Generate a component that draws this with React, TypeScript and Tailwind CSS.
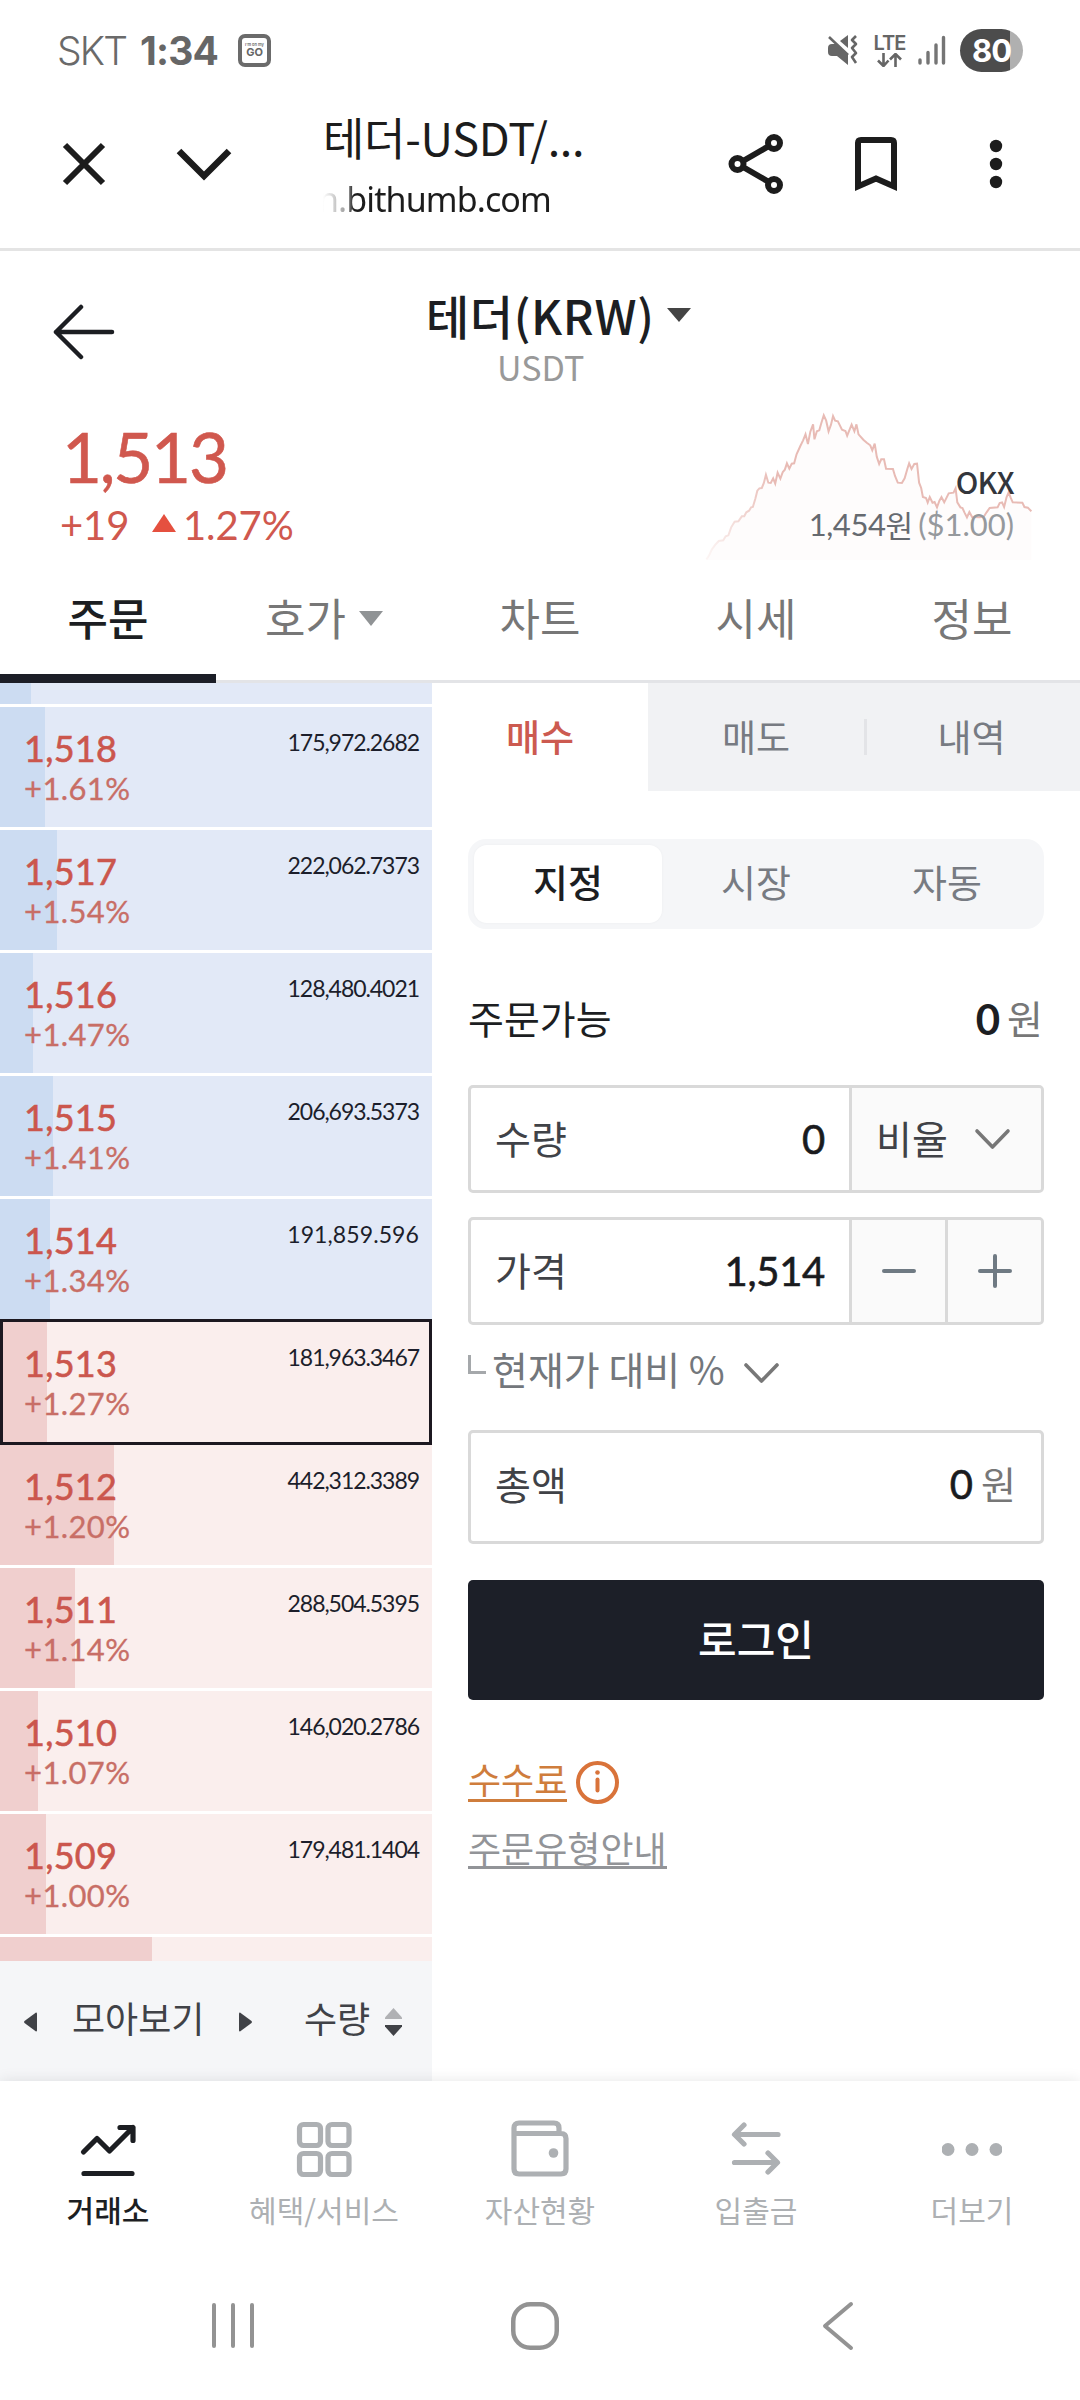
import type { ReactNode } from 'react';
import clsx from 'clsx';

const KR = "font-['Noto_Sans_CJK_KR',sans-serif]";
const NUM = "font-['Lato',sans-serif]";

type Level = { price: string; rate: string; amount: string; bar: number };

const asks: Level[] = [
    { price: '1,518', rate: '+1.61%', amount: '175,972.2682', bar: 45 },
    { price: '1,517', rate: '+1.54%', amount: '222,062.7373', bar: 57 },
    { price: '1,516', rate: '+1.47%', amount: '128,480.4021', bar: 33 },
    { price: '1,515', rate: '+1.41%', amount: '206,693.5373', bar: 53 },
    { price: '1,514', rate: '+1.34%', amount: '191,859.596', bar: 50 },
];

const current: Level = { price: '1,513', rate: '+1.27%', amount: '181,963.3467', bar: 47 };

const bids: Level[] = [
    { price: '1,512', rate: '+1.20%', amount: '442,312.3389', bar: 114 },
    { price: '1,511', rate: '+1.14%', amount: '288,504.5395', bar: 75 },
    { price: '1,510', rate: '+1.07%', amount: '146,020.2786', bar: 38 },
    { price: '1,509', rate: '+1.00%', amount: '179,481.1404', bar: 46 },
];

const SPARK =
    'M484 898L492 886L500 868L510 854L520 843L533 841L540 829L548 826L556 802L566 785L577 784L587 769L594 769L600 757L608 752L614 742L619 741L626 717L632 692L638 685L645 684L651 669L657 644L664 668L671 669L678 655L684 671L691 638L699 656L706 636L712 629L718 610L725 626L732 611L739 610L746 583L757 558L765 541L772 523L779 552L786 515L794 493L798 538L805 514L812 511L818 489L825 466L832 482L839 514L846 494L852 468L858 482L866 484L878 509L888 513L893 527L906 494L914 514L920 493L926 523L940 539L950 548L960 556L966 571L973 551L979 590L986 612L992 598L1000 598L1006 626L1026 627L1032 648L1040 668L1052 669L1060 655L1068 626L1073 610L1080 627L1088 612L1096 611L1102 668L1108 684L1113 711L1122 714L1127 728L1133 711L1141 728L1147 726L1154 742L1161 722L1167 711L1175 727L1188 700L1202 698L1208 685L1213 727L1222 742L1228 744L1234 758L1241 772L1248 756L1256 771L1278 772L1290 770L1298 757L1307 744L1330 742L1336 729L1343 727L1349 741L1356 712L1362 697L1368 713L1374 727L1402 728L1408 741L1418 743L1428 754';

function StatusBar() {
    return (
        <div className="flex h-[80px] items-start justify-between pl-[57px] pr-[57px] pt-[29px] text-[#666]">
            <div className="flex h-[42px] items-center font-['Inter',sans-serif] text-[39px] leading-none">
                <span className="w-[83px] font-light tracking-[-1.800px] text-[#6a6a6a]">SKT</span>
                <span className="w-[98px] font-bold tracking-[-0.800px]">1:34</span>
                <span className="flex h-[33px] w-[33px] flex-col items-center justify-center rounded-[7px] border-4 border-[#6b6b6b] leading-none">
                    <span className="whitespace-nowrap text-[4px] font-semibold">I&apos;m on my</span>
                    <span className="text-[11px] font-bold">GO</span>
                </span>
            </div>
            <div className="flex h-[42px] items-center">
                <svg className="h-[30px] w-[31px]" viewBox="0 0 31 30" fill="none">
                    <path d="M1 13q0-4 4-4h5l11 10v11L10 21H5q-4 0-4-4z" fill="#666" />
                    <path d="M13 6l8-6v13z" fill="#666" />
                    <path d="M2 2l19 18" stroke="#666" strokeWidth="2.5" />
                    <path d="M29 1l-4 4 4 4-4 4 4 5-4 4 4 6" stroke="#666" strokeWidth="2.6" strokeLinejoin="round" />
                </svg>
                <div className="ml-[15px] flex w-[33px] flex-col items-center">
                    <span className="font-['Inter',sans-serif] text-[20px] font-semibold leading-[19px] tracking-[-1px]">LTE</span>
                    <svg className="h-[14px] w-[25px]" viewBox="0 0 25 14" fill="none" stroke="#666" strokeWidth="2.6">
                        <path d="M6.500 0v13M1 7.500l5.500 5.500 5-5.500M18.500 14V1M13 6.500L18.500 1 24 6.500" />
                    </svg>
                </div>
                <svg className="ml-[12px] h-[30px] w-[28px]" viewBox="0 0 28 30" stroke="#757575" strokeWidth="3.400" strokeLinecap="round">
                    <path d="M2 25v3M10 17.500v10.500M18 10v18M25.500 2.500v25.500" />
                </svg>
                <div className="ml-[14px] flex h-[43px] w-[63px] items-center justify-center rounded-full bg-[linear-gradient(90deg,#4c4c4c_50px,#b0b0b0_50px)] font-['Inter',sans-serif] text-[31px] font-bold leading-none tracking-[-1px] text-white">
                    80
                </div>
            </div>
        </div>
    );
}

function BrowserBar() {
    return (
        <div className="flex h-[171px] items-center border-b-[3px] border-[#e4e4e4] pl-[62px] text-[#1c1c1c]">
            <svg className="h-[44px] w-[44px]" viewBox="0 0 44 44" stroke="currentColor" strokeWidth="6">
                <path d="M3 3l38 38M41 3L3 41" />
            </svg>
            <svg className="ml-[70px] h-[34px] w-[56px]" viewBox="0 0 56 34" fill="none" stroke="currentColor" strokeWidth="6.500">
                <path d="M3 4l25 25L53 4" />
            </svg>
            <div className={clsx(KR, 'ml-[91px] w-[265px] whitespace-nowrap pt-[9px]')}>
                <div className="text-[45px] leading-[58px] tracking-[-0.300px]">테더-USDT/...</div>
                <div className="mt-[3px] bg-[linear-gradient(90deg,#fff_0px,#999_24px,#1c1c1c_31px)] bg-clip-text font-['Noto_Sans',sans-serif] text-[34px] leading-[60px] tracking-[-0.900px] text-transparent">
                    <span className="-ml-[5px]">n.bithumb.com</span>
                </div>
            </div>
            <svg className="ml-[140px] h-[62px] w-[56px]" viewBox="0 0 56 62" fill="none" stroke="currentColor" strokeWidth="6">
                <circle cx="9.500" cy="31" r="6" />
                <circle cx="46" cy="10" r="6" />
                <circle cx="46" cy="52" r="6" />
                <path d="M15 28l26-15M15 34l26 15" />
            </svg>
            <svg className="ml-[70px] h-[56px] w-[44px]" viewBox="0 0 44 56" fill="none" stroke="currentColor" strokeWidth="6">
                <path d="M4 50.500V7q0-3 3-3h30q3 0 3 3v43.500l-18-8z" />
            </svg>
            <svg className="ml-[91px] h-[50px] w-[14px]" viewBox="0 0 14 50" fill="currentColor">
                <circle cx="7" cy="7" r="6.200" />
                <circle cx="7" cy="25" r="6.200" />
                <circle cx="7" cy="43" r="6.200" />
            </svg>
        </div>
    );
}

function CoinHeader() {
    return (
        <header className="flex h-[149px] items-start pl-[52px] pt-[38px]">
            <svg className="mt-[15px] h-[56px] w-[64px]" viewBox="0 0 64 56" fill="none" stroke="#1c1e22" strokeWidth="4.500" strokeLinecap="round" strokeLinejoin="round">
                <path d="M29 3L4 28l25 25M4 28h56" />
            </svg>
            <div className={clsx(KR, 'ml-[306px] flex w-[280px] flex-col')}>
                <div className="flex items-center gap-[14px] text-[47px] font-medium leading-[52px] text-[#1c1e22]">
                    <span className="w-[231px] whitespace-nowrap pl-1 tracking-[0.600px]">테더(KRW)</span>
                    <svg className="h-[14px] w-[24px]" viewBox="0 0 24 14" fill="#444">
                        <path d="M0 0h24L12 14z" />
                    </svg>
                </div>
                <span className="pl-[75px] text-[34px] leading-[52px] text-[#999]">USDT</span>
            </div>
        </header>
    );
}

function PriceSummary() {
    return (
        <section className="flex h-[158px] justify-between pl-[60px] pr-[48px]">
            <div className={clsx(NUM, 'text-[#d0584e]')}>
                <div className="ml-[2px] mt-[22px] text-[69px] leading-[70px] tracking-[-2.200px] [-webkit-text-stroke:0.6px]">1,513</div>
                <div className="mt-[9px] flex items-center text-[40px] leading-[48px] tracking-[-0.100px]">
                    <span className="w-[92px]">+19</span>
                    <svg className="-mt-[4px] mr-[7px] h-[18px] w-[24px]" viewBox="0 0 24 18" fill="#e5503f">
                        <path d="M12 0l12 18H0z" />
                    </svg>
                    <span>1.27%</span>
                </div>
            </div>
            <div className="relative mt-[10px] h-[150px] w-[327px]">
                <svg className="absolute inset-0 h-full w-full" viewBox="480 450 950 450" preserveAspectRatio="none">
                    <defs>
                        <linearGradient id="sparkStroke" gradientUnits="userSpaceOnUse" x1="480" y1="0" x2="680" y2="0">
                            <stop offset="0" stopColor="#fdf7f6" />
                            <stop offset="1" stopColor="#e8bbb5" />
                        </linearGradient>
                    </defs>
                    <path d={SPARK + 'V900H484z'} fill="#fefcfc" />
                    <path d={SPARK} fill="none" stroke="url(#sparkStroke)" strokeWidth="2" vectorEffect="non-scaling-stroke" />
                </svg>
                <div className={clsx(KR, 'relative pr-[18px] pt-[49px] text-right text-[30px]')}>
                    <div className="font-medium leading-[44px] tracking-[-0.700px] text-[#33363c]">OKX</div>
                    <div className="mt-px flex items-center justify-end leading-[40px] text-[#666a70]">
                        <span className={clsx(NUM, 'text-[31px] tracking-[-0.400px]')}>1,454</span>
                        <span className="text-[30px]">원</span>
                        <span className={clsx(NUM, 'ml-[5px] text-[31px] text-[#96999d]')}>($1.00)</span>
                    </div>
                </div>
            </div>
        </section>
    );
}

function MainTabs() {
    return (
        <nav className={clsx(KR, 'grid h-[125px] grid-cols-5 border-b-[3px] border-[#e3e4e7] text-[44px] leading-[119px] text-[#777]')}>
            <div className="-mb-[3px] h-[125px] border-b-[9px] border-[#1c1e27] text-center font-medium text-[#1c1e22]">주문</div>
            <div className="flex justify-center gap-[13px]">
                호가
                <svg className="mt-[53px] h-[15px] w-[24px]" viewBox="0 0 24 15" fill="#909395">
                    <path d="M0 0h24L12 15z" />
                </svg>
            </div>
            <div className="text-center">차트</div>
            <div className="text-center">시세</div>
            <div className="text-center">정보</div>
        </nav>
    );
}

function BookRow({ level, side, active }: { level: Level; side: 'ask' | 'bid'; active?: boolean }) {
    return (
        <div
            className={clsx(
                NUM,
                'relative flex shrink-0 justify-between',
                side === 'ask' ? 'bg-[#e2e9f7]' : 'bg-[#faeeed]',
                active ? '-my-[3px] h-[126px] border-[3px] border-[#1c1820] pl-[21px] pr-[10px]' : 'h-[120px] pl-[24px] pr-[13px]'
            )}
        >
            {/* depth bar sits behind the numbers */}
            <div
                className={clsx('absolute left-0 top-0 h-full', side === 'ask' ? 'bg-[#ccdcf2]' : 'bg-[#f0cfce]')}
                style={{ width: active ? level.bar - 3 : level.bar }}
            />
            <div className="relative pt-[19px]">
                <div className="text-[36px] leading-[44px] tracking-[0.300px] text-[#cb564d] [-webkit-text-stroke:0.6px]">{level.price}</div>
                <div className="-mt-px text-[31px] leading-[38px] tracking-[0.400px] text-[#c86e66] [-webkit-text-stroke:0.3px]">{level.rate}</div>
            </div>
            <div
                className={clsx(
                    'relative pt-[21px] text-[23px] leading-[28px] text-[#1c1e2b]',
                    level.amount.length < 12 ? 'tracking-[0.100px]' : 'tracking-[-1.050px]'
                )}
            >
                {level.amount}
            </div>
        </div>
    );
}

function OrderBook() {
    return (
        <div className="flex w-[432px] flex-col">
            <div className="flex flex-col gap-[3px]">
                <div className="h-[21px] bg-[#e2e9f7]">
                    <div className="h-full w-[31px] bg-[#ccdcf2]" />
                </div>
                {asks.map((l) => (
                    <BookRow key={l.price} level={l} side="ask" />
                ))}
                <BookRow level={current} side="bid" active />
                {bids.map((l) => (
                    <BookRow key={l.price} level={l} side="bid" />
                ))}
                <div className="h-[24px] bg-[#faeeed]">
                    <div className="h-full w-[152px] bg-[#f0cfce]" />
                </div>
            </div>
            <div className={clsx(KR, 'flex h-[121px] items-center bg-[#f5f6f8] pl-[24px] text-[36px] leading-[60px] text-[#404247]')}>
                <svg className="mt-[2px] h-[20px] w-[13px]" viewBox="0 0 13 20" fill="#404247">
                    <path d="M12 0.500q1 0 1 1v17q0 1-1 1L0.500 11q-0.800-1 0-2z" />
                </svg>
                <span className="-mt-[8px] ml-[35px] w-[167px]">모아보기</span>
                <svg className="mt-[2px] h-[20px] w-[13px]" viewBox="0 0 13 20" fill="#404247">
                    <path d="M1 0.500q-1 0-1 1v17q0 1 1 1L12.500 11q0.800-1 0-2z" />
                </svg>
                <span className="-mt-[8px] ml-[52px] w-[81px]">수량</span>
                <svg className="mt-[1px] h-[28px] w-[17px]" viewBox="0 0 17 28">
                    <path d="M8.500 0L17 9.500V11H0V9.500z" fill="#b0b1b4" />
                    <path d="M8.500 28L17 18.500V17H0v1.500z" fill="#404247" />
                </svg>
            </div>
        </div>
    );
}

function Chevron() {
    return (
        <svg className="h-[22px] w-[37px]" viewBox="0 0 37 22" fill="none" stroke="#777" strokeWidth="3.600" strokeLinecap="round" strokeLinejoin="round">
            <path d="M3 3l15.500 16L34 3" />
        </svg>
    );
}

function Field({ label, value, children }: { label: string; value: string; children?: ReactNode }) {
    return (
        <div className="flex h-[108px] overflow-hidden rounded-[5px] border-[3px] border-[#d9d9d9]">
            <div className="flex flex-1 items-center justify-between pl-[24px] pr-[24px]">
                <span className={clsx(KR, '-mt-[5px] text-[39px] leading-[56px] text-[#404247]')}>{label}</span>
                <span className={clsx(NUM, 'text-[40px] leading-[48px] tracking-[-0.300px] text-[#1a1b1e] [-webkit-text-stroke:0.6px]')}>{value}</span>
            </div>
            {children}
        </div>
    );
}

function OrderForm() {
    return (
        <div className="flex-1">
            <div className={clsx(KR, 'grid h-[108px] grid-cols-3 bg-[#f1f2f4] text-[37px] leading-[106px] text-[#777b82]')}>
                <div className="bg-white text-center font-medium text-[#cc5a50]">매수</div>
                <div className="text-center">매도</div>
                <div className="flex items-center">
                    <div className="h-[36px] w-[3px] bg-[#e3e4e7]" />
                    <span className="-mt-[2px] mr-[4px] flex-1 text-center">내역</span>
                </div>
            </div>

            <div className="px-9 pt-12">
                <div className={clsx(KR, 'grid h-[90px] grid-cols-3 rounded-[18px] bg-[#f5f6f8] p-[6px] text-[38px] leading-[72px] text-[#777b82]')}>
                    <div className="rounded-[13px] bg-white text-center font-medium text-[#1c1e22] shadow-[0_0_3px_rgba(0,0,0,0.040)]">지정</div>
                    <div className="text-center">시장</div>
                    <div className="pl-[6px] text-center">자동</div>
                </div>

                <div className={clsx(KR, 'mt-[58px] flex h-[60px] items-center justify-between pr-px text-[39px] leading-[60px] text-[#1c1e22]')}>
                    <span>주문가능</span>
                    <span className="flex items-center">
                        <span className={clsx(NUM, 'mt-[3px] text-[42px] font-bold')}>0</span>
                        <span className="ml-[7px] text-[#777]">원</span>
                    </span>
                </div>

                <div className="mt-[38px]">
                    <Field label="수량" value="0">
                        <div className="flex w-[192px] items-center border-l-[3px] border-[#d9d9d9] bg-[#fafafa] pl-[24px]">
                            <span className={clsx(KR, '-mt-[5px] w-[98px] text-[39px] leading-[56px] text-[#404247]')}>비율</span>
                            <Chevron />
                        </div>
                    </Field>
                </div>
                <div className="mt-6">
                    <Field label="가격" value="1,514">
                        <div className="flex w-[192px] border-l-[3px] border-[#d9d9d9] bg-[#fafafa]">
                            <div className="flex flex-1 items-center justify-center border-r-[3px] border-[#d9d9d9]">
                                <svg className="h-[36px] w-[36px]" viewBox="0 0 36 36" stroke="#6f7a83" strokeWidth="4" strokeLinecap="round">
                                    <path d="M3 18h30" />
                                </svg>
                            </div>
                            <div className="flex flex-1 items-center justify-center">
                                <svg className="h-[36px] w-[36px]" viewBox="0 0 36 36" stroke="#6f7a83" strokeWidth="4" strokeLinecap="round">
                                    <path d="M3 18h30M18 3v30" />
                                </svg>
                            </div>
                        </div>
                    </Field>
                </div>

                <div className={clsx(KR, 'flex h-[105px] items-start pt-[15px] text-[39px] leading-[56px] text-[#73777c]')}>
                    <svg className="mt-[15px] h-[19px] w-[18px]" viewBox="0 0 18 19" fill="none" stroke="#a5a8ab" strokeWidth="3">
                        <path d="M1.500 0v17.500H18" />
                    </svg>
                    <span className="ml-[6px] mr-[18px] whitespace-nowrap">현재가 대비 %</span>
                    <span className="mt-[22px]">
                        <Chevron />
                    </span>
                </div>

                <div className={clsx(KR, 'flex h-[114px] items-center justify-between rounded-[5px] border-[3px] border-[#d9d9d9] pl-[24px] pr-[25px] text-[39px] leading-[56px]')}>
                    <span className="-mt-[9px] text-[#404247]">총액</span>
                    <span className="-mt-[6px] flex items-center">
                        <span className={clsx(NUM, 'text-[40px] text-[#1a1b1e] [-webkit-text-stroke:0.6px]')}>0</span>
                        <span className="-mt-[3px] ml-[8px] text-[38px] text-[#777]">원</span>
                    </span>
                </div>

                <button className={clsx(KR, 'mt-9 h-[120px] w-full rounded-[5px] bg-[#1c1f28] pb-[5px] text-[42px] font-medium leading-[60px] text-white')}>
                    로그인
                </button>

                <div className={clsx(KR, 'mt-[57px] flex h-[50px] items-center text-[36px] leading-[41px] text-[#cf7d3c]')}>
                    <span className="-mt-[5px] border-b-[3px] border-[#cf7d3c]">수수료</span>
                    <svg className="ml-[9px] h-[43px] w-[43px]" viewBox="0 0 43 43" fill="none" stroke="#d9733a" strokeWidth="4">
                        <circle cx="21.500" cy="21.500" r="19.500" />
                        <path d="M21.500 18.500v11" strokeLinecap="round" />
                        <circle cx="21.500" cy="11.500" r="2.300" fill="#d9733a" stroke="none" />
                    </svg>
                </div>
                <div className={clsx(KR, 'mt-[21px] text-[36px] leading-[38px] text-[#929498]')}>
                    <span className="inline-block h-[41px] border-b-[3px] border-[#929498]">주문유형안내</span>
                </div>
            </div>
        </div>
    );
}

function NavItem({ label, active, children }: { label: string; active?: boolean; children: ReactNode }) {
    return (
        <div className={clsx('flex flex-col items-center', active ? 'font-medium text-[#1c1e22]' : 'text-[#adb0b3]')}>
            <svg className="h-[60px] w-[60px]" viewBox="0 0 60 60" fill="none" stroke="currentColor" strokeWidth="5.200" strokeLinecap="round" strokeLinejoin="round">
                {children}
            </svg>
            <span className="mt-[8px] whitespace-nowrap text-[30px] leading-[43px]">{label}</span>
        </div>
    );
}

function BottomNav() {
    return (
        <nav className={clsx(KR, 'relative grid h-[154px] grid-cols-5 bg-white pt-[39px] shadow-[0_0_14px_rgba(0,0,0,0.100)]')}>
            <NavItem label="거래소" active>
                <path d="M5.500 32L19 18.500l12.500 12.500L55 7.500M42 7.500h13v13M6 53.500h48" />
            </NavItem>
            <NavItem label="혜택/서비스">
                <rect x="5.500" y="4.500" width="21" height="21" rx="4" />
                <rect x="34" y="4.500" width="21" height="21" rx="4" />
                <rect x="5.500" y="33.500" width="21" height="21" rx="4" />
                <rect x="34" y="33.500" width="21" height="21" rx="4" />
            </NavItem>
            <NavItem label="자산현황">
                <path d="M4 13.500V49q0 5 5 5h42q5 0 5-5V18.500q0-5-5-5H4V8q0-5 5-5h35q5 0 5 5v5" />
                <circle cx="43.500" cy="33" r="4.800" fill="currentColor" stroke="none" />
            </NavItem>
            <NavItem label="입출금">
                <path d="M52 14.500H9M18 5L8.500 14.500 18 24M8.500 42.500H51M42 33l9.500 9.500L42 52" />
            </NavItem>
            <NavItem label="더보기">
                <g fill="currentColor" stroke="none">
                    <circle cx="6" cy="29.500" r="6.500" />
                    <circle cx="30" cy="29.500" r="6.500" />
                    <circle cx="54" cy="29.500" r="6.500" />
                </g>
            </NavItem>
        </nav>
    );
}

function SystemNav() {
    return (
        <div className="relative flex h-[165px] items-start bg-white pl-[211px] pt-[65px]">
            <svg className="h-[52px] w-[46px]" viewBox="0 0 46 52" stroke="#939393" strokeWidth="4" strokeLinecap="round">
                <path d="M3 5v41M22 5v41M41 5v41" />
            </svg>
            <svg className="ml-[252px] h-[52px] w-[52px]" viewBox="0 0 52 52" fill="none" stroke="#939393" strokeWidth="4.500">
                <rect x="4.250" y="4.250" width="43.500" height="43.500" rx="17" />
            </svg>
            <svg className="ml-[259px] h-[52px] w-[36px]" viewBox="0 0 36 52" fill="none" stroke="#939393" strokeWidth="4" strokeLinecap="round" strokeLinejoin="round">
                <path d="M31 4L5 26l26 22" />
            </svg>
        </div>
    );
}

export default function App() {
    return (
        <div className="h-[2400px] w-[1080px] overflow-hidden bg-white">
            <StatusBar />
            <BrowserBar />
            <CoinHeader />
            <PriceSummary />
            <MainTabs />
            <main className="flex h-[1398px]">
                <OrderBook />
                <OrderForm />
            </main>
            <BottomNav />
            <SystemNav />
        </div>
    );
}
